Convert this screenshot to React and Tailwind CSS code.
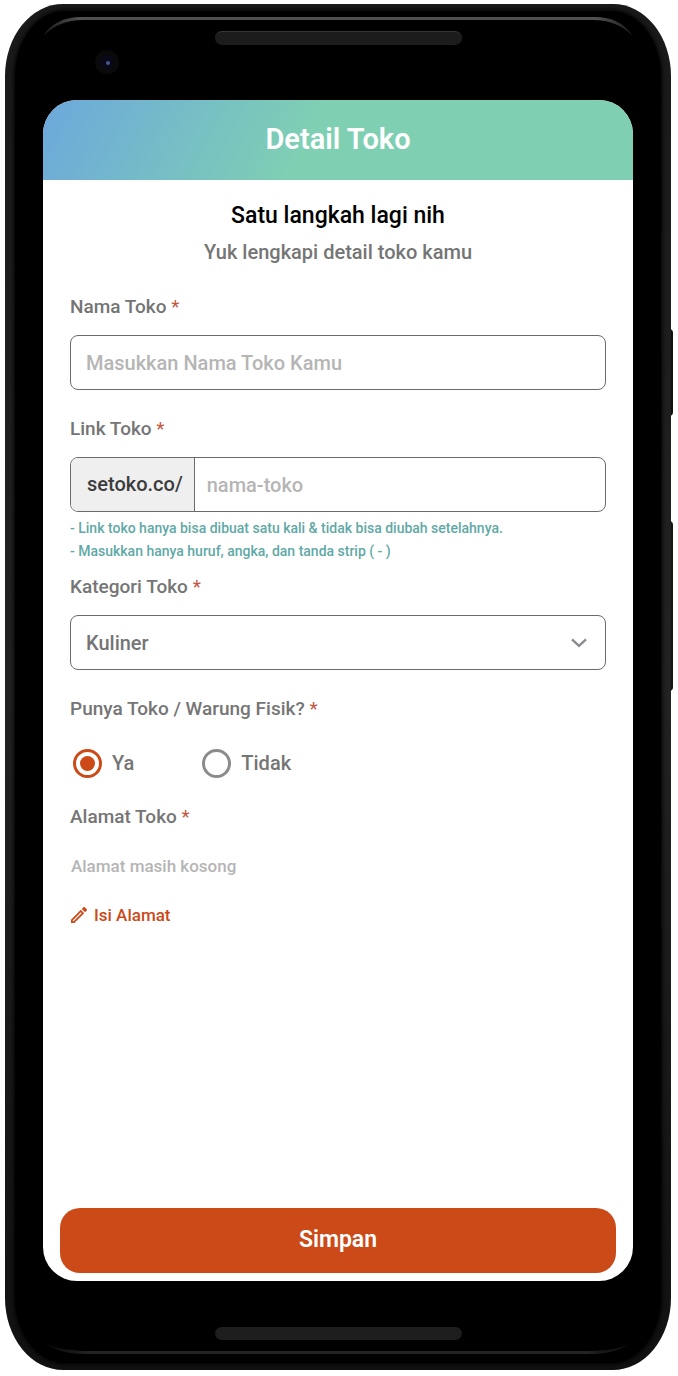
import { useState } from "react";

const LABEL = "block text-[19px] leading-6";
const FIELD =
  "h-[55px] w-full min-w-0 text-[20px] placeholder:text-[#b5b5b5] placeholder:opacity-100 outline-none";

function Required() {
  return <span className="font-normal text-[#c4553f]">*</span>;
}

function RadioOption({ id, name, label, checked, onChange }) {
  return (
    <label htmlFor={id} className="flex cursor-pointer items-center gap-2.5 text-[20px] leading-[30px]">
      <span className="relative flex size-[29px] items-center justify-center">
        <input
          id={id}
          name={name}
          type="radio"
          checked={checked}
          onChange={onChange}
          className="peer size-[29px] appearance-none rounded-full border-[3px] border-[#8b8b8b] bg-white checked:border-[#cb4a18]"
        />
        <span className="pointer-events-none absolute size-[15px] rounded-full bg-[#cb4a18] opacity-0 peer-checked:opacity-100" />
      </span>
      {label}
    </label>
  );
}

function StoreForm() {
  const [name, setName] = useState("");
  const [link, setLink] = useState("");
  const [category, setCategory] = useState("Kuliner");
  const [physical, setPhysical] = useState("ya");

  return (
    <form className="flex flex-1 flex-col" onSubmit={(e) => e.preventDefault()}>
      <div className="flex flex-col px-[27px] pt-[30px]">
        <div>
          <label htmlFor="nama" className={LABEL}>
            Nama Toko <Required />
          </label>
          <input
            id="nama"
            type="text"
            value={name}
            onChange={(e) => setName(e.target.value)}
            placeholder="Masukkan Nama Toko Kamu"
            className={`${FIELD} mt-4 block rounded-lg border border-[#6b6b6e] px-[15px]`}
          />
        </div>

        <div className="mt-[27px]">
          <label htmlFor="link" className={LABEL}>
            Link Toko <Required />
          </label>
          <div className="mt-4 flex h-[55px] overflow-hidden rounded-lg border border-[#6b6b6e]">
            <span className="flex shrink-0 items-center border-r border-[#6b6b6e] bg-[#efefef] pr-[11px] pb-0.5 pl-4 text-[20px] text-[#3c3c3c]">
              setoko.co/
            </span>
            <input
              id="link"
              type="text"
              value={link}
              onChange={(e) => setLink(e.target.value)}
              placeholder="nama-toko"
              className={`${FIELD} -mt-px px-3`}
            />
          </div>
          <ul className="mt-[5px] text-[14px] leading-[23px] text-[#5fa9a6]">
            <li>- Link toko hanya bisa dibuat satu kali &amp; tidak bisa diubah setelahnya.</li>
            <li>- Masukkan hanya huruf, angka, dan tanda strip ( - )</li>
          </ul>
        </div>

        <div className="mt-3">
          <label htmlFor="kategori" className={LABEL}>
            Kategori Toko <Required />
          </label>
          <div className="relative mt-4">
            <select
              id="kategori"
              value={category}
              onChange={(e) => setCategory(e.target.value)}
              className={`${FIELD} block appearance-none rounded-lg border border-[#6b6b6e] bg-white px-[15px]`}
            >
              <option>Kuliner</option>
              <option>Fashion</option>
              <option>Elektronik</option>
            </select>
            <svg
              viewBox="0 0 16 10"
              className="pointer-events-none absolute top-[23px] right-[19px] h-2.5 w-4"
              fill="none"
              stroke="#8b8b93"
              strokeWidth="2.4"
            >
              <path d="M1 1.3 8 7.8 15 1.3" />
            </svg>
          </div>
        </div>

        <fieldset className="mt-[27px]">
          <legend className={LABEL}>
            Punya Toko / Warung Fisik? <Required />
          </legend>
          <div className="mt-[27px] flex gap-[68px] pl-[3px]">
            <RadioOption
              id="ya"
              name="fisik"
              label="Ya"
              checked={physical === "ya"}
              onChange={() => setPhysical("ya")}
            />
            <RadioOption
              id="tidak"
              name="fisik"
              label="Tidak"
              checked={physical === "tidak"}
              onChange={() => setPhysical("tidak")}
            />
          </div>
        </fieldset>

        <section className="mt-[27px]">
          <h3 className={LABEL}>
            Alamat Toko <Required />
          </h3>
          <div className="pl-px text-[17px] leading-6">
            <p className="mt-[25px] text-[#b5b5b5]">Alamat masih kosong</p>
            <button type="button" className="mt-[25px] flex items-center gap-[7px] text-[#cb4a18]">
              <svg viewBox="3 3 18 18" className="size-4" fill="currentColor">
                <path d="M14.06 9.02l.92.92L5.92 19H5v-.92l9.06-9.06M17.66 3c-.25 0-.51.1-.7.29l-1.83 1.83 3.75 3.75 1.83-1.83c.39-.39.39-1.02 0-1.41l-2.34-2.34c-.2-.2-.45-.29-.71-.29zm-3.6 3.19L3 17.25V21h3.75L17.81 9.94l-3.75-3.75z" />
              </svg>
              Isi Alamat
            </button>
          </div>
        </section>
      </div>

      <div className="mt-auto px-[17px] pt-8 pb-2">
        <button
          type="submit"
          className="h-[65px] w-full rounded-[20px] bg-[#cb4a18] text-[23px] font-semibold text-white"
        >
          Simpan
        </button>
      </div>
    </form>
  );
}

export default function App() {
  return (
    <main className="flex min-h-screen flex-col bg-white pt-1 pr-[7px] pb-1.5 pl-[5px] font-['Roboto',sans-serif] font-medium text-[#757575]">
      <div className="relative flex flex-1 flex-col">
        <span className="absolute top-[325px] -right-0.5 h-[87px] w-2 rounded-sm bg-[#111111]" />
        <span className="absolute top-[517px] -right-0.5 h-[170px] w-2 rounded-sm bg-[#161616]" />

        <div className="relative flex flex-1 flex-col rounded-[58px_/_72px] bg-linear-to-b from-[#191919] via-[#222222] to-[#111111] px-2.5 py-[7px]">
          <div className="flex flex-1 flex-col rounded-[50px_/_66px] bg-black px-7 shadow-[0_0_4px_1px_#000000]">
            <div className="relative flex h-[89px] justify-center">
              <svg
                viewBox="0 0 590 20"
                preserveAspectRatio="none"
                className="absolute top-1.5 left-0 h-5 w-full"
                aria-hidden="true"
              >
                <defs>
                  <linearGradient id="rimTop">
                    <stop offset="0" stopColor="#1a1a1a" />
                    <stop offset="0.06" stopColor="#505050" />
                    <stop offset="0.94" stopColor="#505050" />
                    <stop offset="1" stopColor="#1a1a1a" />
                  </linearGradient>
                </defs>
                <path
                  d="M0 19C9 6 21 0 38 0H552C569 0 581 6 590 19 578 8 567 3 550 3H40C23 3 12 8 0 19Z"
                  fill="url(#rimTop)"
                />
              </svg>
              <span className="absolute top-[39px] left-[52px] flex size-6 items-center justify-center rounded-full bg-[#0a0a0b]">
                <span className="flex size-3.5 items-center justify-center rounded-full bg-[#080818] pt-0.5 pl-0.5">
                  <span className="size-1 rounded-full bg-[#48588c]" />
                </span>
              </span>
              <span className="mt-5 h-3.5 w-[247px] rounded-full border-t border-[#363636] bg-[#1c1c1c]" />
            </div>

            <div className="flex flex-1 flex-col overflow-hidden rounded-[34px] bg-white">
              <header className="flex h-20 items-center justify-center bg-[linear-gradient(116deg,#6ca8dc_0%,#7fd0b2_46%)] pb-0.5">
                <h1 className="text-[29px] leading-9 font-semibold text-white">Detail Toko</h1>
              </header>
              <div className="pt-[21px] text-center">
                <h2 className="text-[23px] leading-[30px] text-black">Satu langkah lagi nih</h2>
                <p className="mt-2 text-[20px] leading-[26px]">Yuk lengkapi detail toko kamu</p>
              </div>
              <StoreForm />
            </div>

            <div className="relative flex h-[82px] justify-center">
              <span className="mt-[46px] h-[13px] w-[247px] rounded-full bg-[#1e1e1e]" />
              <svg
                viewBox="0 0 590 12"
                preserveAspectRatio="none"
                className="absolute bottom-[9px] left-0 h-3 w-full"
                aria-hidden="true"
              >
                <defs>
                  <linearGradient id="rimBottom">
                    <stop offset="0" stopColor="#050505" />
                    <stop offset="0.08" stopColor="#242424" />
                    <stop offset="0.92" stopColor="#242424" />
                    <stop offset="1" stopColor="#050505" />
                  </linearGradient>
                </defs>
                <path
                  d="M0 0C14 7 28 9 45 9H545C562 9 576 7 590 0 576 10 563 12 545 12H45C27 12 14 10 0 0Z"
                  fill="url(#rimBottom)"
                />
              </svg>
            </div>
          </div>
        </div>
      </div>
    </main>
  );
}
